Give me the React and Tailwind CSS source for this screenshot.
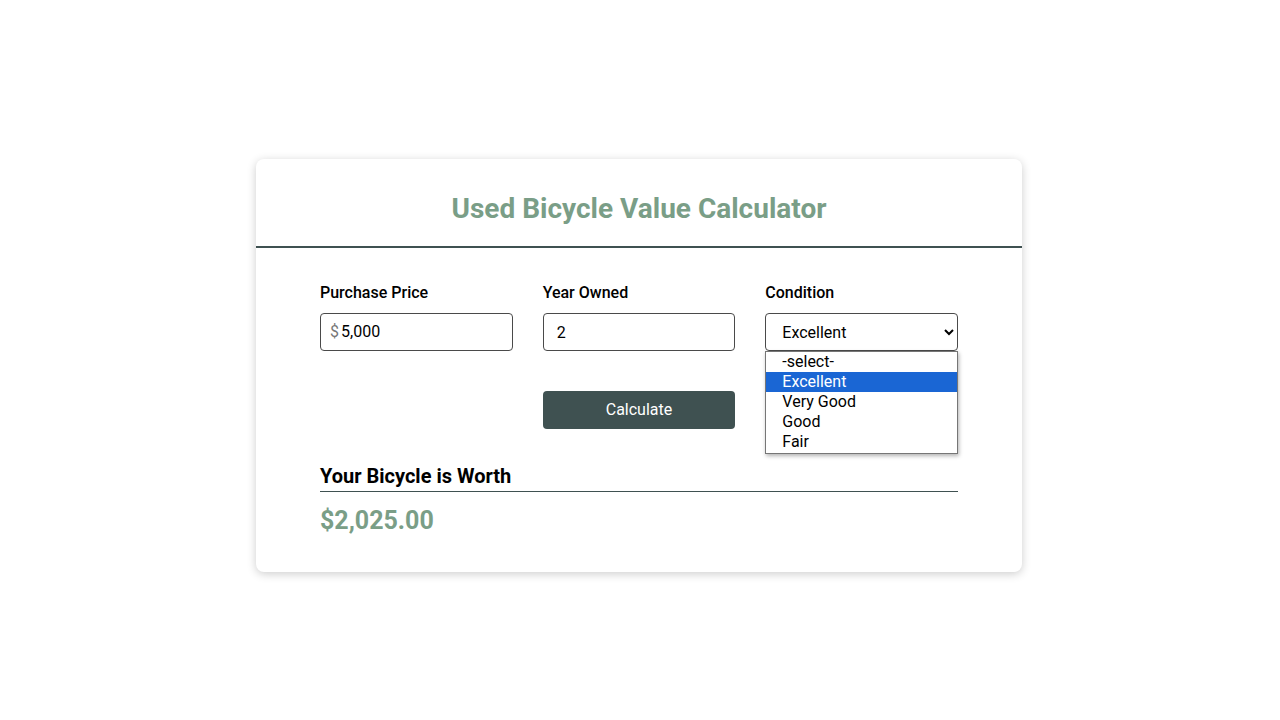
import React, { useState } from "react";

const options = ["-select-", "Excellent", "Very Good", "Good", "Fair"];

const App = () => {
  const [price, setPrice] = useState("5,000");
  const [years, setYears] = useState("2");
  const [condition, setCondition] = useState("Excellent");

  return (
    <div
      className="min-h-screen w-full bg-white flex items-center justify-center pt-[10px] pr-[2px]"
      style={{ fontFamily: "Roboto, 'Noto Sans', sans-serif" }}
    >
      <div className="w-[766px] bg-white rounded-lg shadow-[0_2px_10px_rgba(0,0,0,0.2)]">
        <div className="border-b-2 border-[#3f5151] pt-[33px] pb-[20px] text-center">
          <h1 className="text-[28px] leading-[34px] font-bold text-[#7a9e87]">
            Used Bicycle Value Calculator
          </h1>
        </div>

        <div className="px-16 pt-[35px] pb-[35px]">
          <div className="grid grid-cols-3 gap-x-[30px]">
            <div className="flex flex-col">
              <label className="text-base leading-5 font-medium text-black mb-[10px]">
                Purchase Price
              </label>
              <div className="flex items-center h-[38px] border border-[#4a4a4a] rounded px-[9px] pt-[1px]">
                <span className="text-[#777] text-base mr-[2px]">$</span>
                <input
                  className="w-full outline-none text-base text-black"
                  value={price}
                  onChange={(e) => setPrice(e.target.value)}
                />
              </div>
            </div>
            <div className="flex flex-col">
              <label className="text-base leading-5 font-medium text-black mb-[10px]">
                Year Owned
              </label>
              <input
                className="h-[38px] border border-[#4a4a4a] rounded px-[13px] pt-[1px] outline-none text-base text-black"
                value={years}
                onChange={(e) => setYears(e.target.value)}
              />
            </div>
            <div className="flex flex-col relative">
              <label className="text-base leading-5 font-medium text-black mb-[10px]">
                Condition
              </label>
              <select
                className="h-[38px] border border-[#4a4a4a] rounded pl-[12px] pr-[4px] pt-[1px] text-base text-black bg-white outline-none"
                value={condition}
                onChange={(e) => setCondition(e.target.value)}
              >
                {options.map((o) => (
                  <option key={o}>{o}</option>
                ))}
              </select>
              {/* open dropdown list */}
              <div className="absolute left-0 right-0 top-[68px] bg-white border border-[#767676] shadow-[1px_2px_4px_rgba(0,0,0,0.3)] pb-[1px] z-10">
                {options.map((o) => (
                  <div
                    key={o}
                    className={
                      o === condition
                        ? "h-5 leading-5 pl-[16px] text-base bg-[#1a66d4] text-white"
                        : "h-5 leading-5 pl-[16px] text-base text-black"
                    }
                  >
                    {o}
                  </div>
                ))}
              </div>
            </div>
          </div>

          <div className="grid grid-cols-3 gap-x-[30px] mt-[40px]">
            <div></div>
            <button className="h-[38px] bg-[#3f5151] text-white text-base rounded">
              Calculate
            </button>
          </div>

          <div className="mt-[33px]">
            <h2 className="text-xl font-bold text-black leading-[28px] border-b border-[#3f5151] pb-[1px]">
              Your Bicycle is Worth
            </h2>
            <p className="text-[25px] font-bold text-[#7a9e87] mt-[13px] leading-8">
              $2,025.00
            </p>
          </div>
        </div>
      </div>
    </div>
  );
};

export default App;
